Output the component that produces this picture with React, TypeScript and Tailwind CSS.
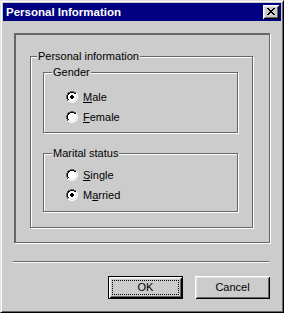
import React from 'react';

const font = { fontFamily: '"Liberation Sans", Arial, sans-serif' };

const radioMap = [
    '....GGGG....',
    '..GGKKKKGG..',
    '.GKKWWWWKKW.',
    '.GKWWWWWWDW.',
    'GKWWWWWWWWDW',
    'GKWWWWWWWWDW',
    'GKWWWWWWWWDW',
    'GKWWWWWWWWDW',
    '.GKWWWWWWDW.',
    '.GDDWWWWDDW.',
    '..WWDDDDWW..',
    '....WWWW....',
];

const colors: Record<string, string> = {
    G: '#666666',
    K: '#000000',
    W: '#ffffff',
    D: '#e3e3e3',
};

const Radio = ({ checked }: { checked?: boolean }) => (
    <svg width="12" height="12" viewBox="0 0 12 12" shapeRendering="crispEdges">
        {radioMap.map((row, y) =>
            row.split('').map((c, x) =>
                c === '.' ? null : (
                    <rect key={`${x}-${y}`} x={x} y={y} width="1" height="1" fill={colors[c]} />
                )
            )
        )}
        {checked && (
            <g fill="#000">
                <rect x="5" y="4" width="2" height="4" />
                <rect x="4" y="5" width="4" height="2" />
            </g>
        )}
    </svg>
);

const RadioRow = ({
    checked,
    hot,
    rest,
    pre = '',
}: {
    checked?: boolean;
    hot: string;
    rest: string;
    pre?: string;
}) => (
    <div className="flex items-center gap-[5px] h-[20px]">
        <Radio checked={checked} />
        <span className="text-[11px] leading-[13px] text-black">
            {pre}
            <span className="underline underline-offset-[1px]">{hot}</span>
            {rest}
        </span>
    </div>
);

const GroupBox = ({
    label,
    labelLeft,
    className,
    children,
}: {
    label: string;
    labelLeft: string;
    className: string;
    children?: React.ReactNode;
}) => (
    <div
        className={`relative border border-[#666666] shadow-[inset_1px_1px_0_#fff,1px_1px_0_#fff] ${className}`}
    >
        <span
            className={`absolute -top-[7px] ${labelLeft} px-[1px] bg-[#cccccc] text-[11px] leading-[13px] text-black whitespace-nowrap`}
        >
            {label}
        </span>
        {children}
    </div>
);

const CloseButton = () => (
    <div className="w-[16px] h-[14px] bg-[#cccccc] flex items-center justify-center shadow-[inset_1px_1px_0_#fff,inset_-1px_-1px_0_#000,inset_2px_2px_0_#e3e3e3,inset_-2px_-2px_0_#666666]">
        <svg width="8" height="7" viewBox="0 0 8 7" shapeRendering="crispEdges" className="-mt-[1px]">
            <g fill="#000">
                <rect x="0" y="0" width="2" height="1" />
                <rect x="6" y="0" width="2" height="1" />
                <rect x="1" y="1" width="2" height="1" />
                <rect x="5" y="1" width="2" height="1" />
                <rect x="2" y="2" width="4" height="1" />
                <rect x="3" y="3" width="2" height="1" />
                <rect x="2" y="4" width="4" height="1" />
                <rect x="1" y="5" width="2" height="1" />
                <rect x="5" y="5" width="2" height="1" />
                <rect x="0" y="6" width="2" height="1" />
                <rect x="6" y="6" width="2" height="1" />
            </g>
        </svg>
    </div>
);

export default function App() {
    return (
        <div
            className="w-[284px] h-[313px] bg-[#cccccc] border border-t-[#e3e3e3] border-l-[#e3e3e3] border-r-black border-b-black shadow-[inset_1px_1px_0_#fff,inset_-1px_-1px_0_#666666] p-[2px] flex flex-col"
            style={font}
        >
            {/* title bar */}
            <div className="h-[18px] bg-[#000080] flex items-center justify-between pl-[3px] pr-[2px]">
                <span className="text-white font-bold text-[11.5px] leading-[14px]">
                    Personal Information
                </span>
                <CloseButton />
            </div>

            {/* sunken frame */}
            <div className="ml-[11px] mt-[12px] w-[256px] h-[210px] border-[#666666] border-l-2 border-t-2 border-r border-b shadow-[1px_1px_0_#fff] pl-[14px] pt-[21px]">
                <GroupBox
                    label="Personal information"
                    labelLeft="left-[6px]"
                    className="w-[223px] h-[172px] pl-[12px] pt-[15px]"
                >
                    <GroupBox
                        label="Gender"
                        labelLeft="left-[8px]"
                        className="w-[195px] h-[61px] pl-[22px] pt-[14px]"
                    >
                        <RadioRow checked hot="M" rest="ale" />
                        <RadioRow hot="F" rest="emale" />
                    </GroupBox>
                    <GroupBox
                        label="Marital status"
                        labelLeft="left-[8px]"
                        className="mt-[20px] w-[195px] h-[59px] pl-[22px] pt-[11px]"
                    >
                        <RadioRow hot="S" rest="ingle" />
                        <RadioRow checked pre="M" hot="a" rest="rried" />
                    </GroupBox>
                </GroupBox>
            </div>

            {/* separator */}
            <div className="ml-[10px] mt-[18px] w-[256px] h-[2px] border-t border-t-[#666666] border-b border-b-white" />

            {/* buttons */}
            <div className="mt-[13px] flex justify-end gap-[12px] pr-[11px]">
                <button className="w-[75px] h-[23px] border border-black bg-[#cccccc] p-[3px] shadow-[inset_1px_1px_0_#fff,inset_-1px_-1px_0_#000,inset_2px_2px_0_#e3e3e3,inset_-2px_-2px_0_#666666]">
                    <span className="flex h-full w-full items-center justify-center border border-dotted border-black text-[11px] leading-[13px] text-black">
                        OK
                    </span>
                </button>
                <button className="w-[75px] h-[23px] bg-[#cccccc] flex items-center justify-center text-[11px] leading-[13px] text-black shadow-[inset_1px_1px_0_#fff,inset_-1px_-1px_0_#000,inset_2px_2px_0_#e3e3e3,inset_-2px_-2px_0_#666666]">
                    Cancel
                </button>
            </div>
        </div>
    );
}
